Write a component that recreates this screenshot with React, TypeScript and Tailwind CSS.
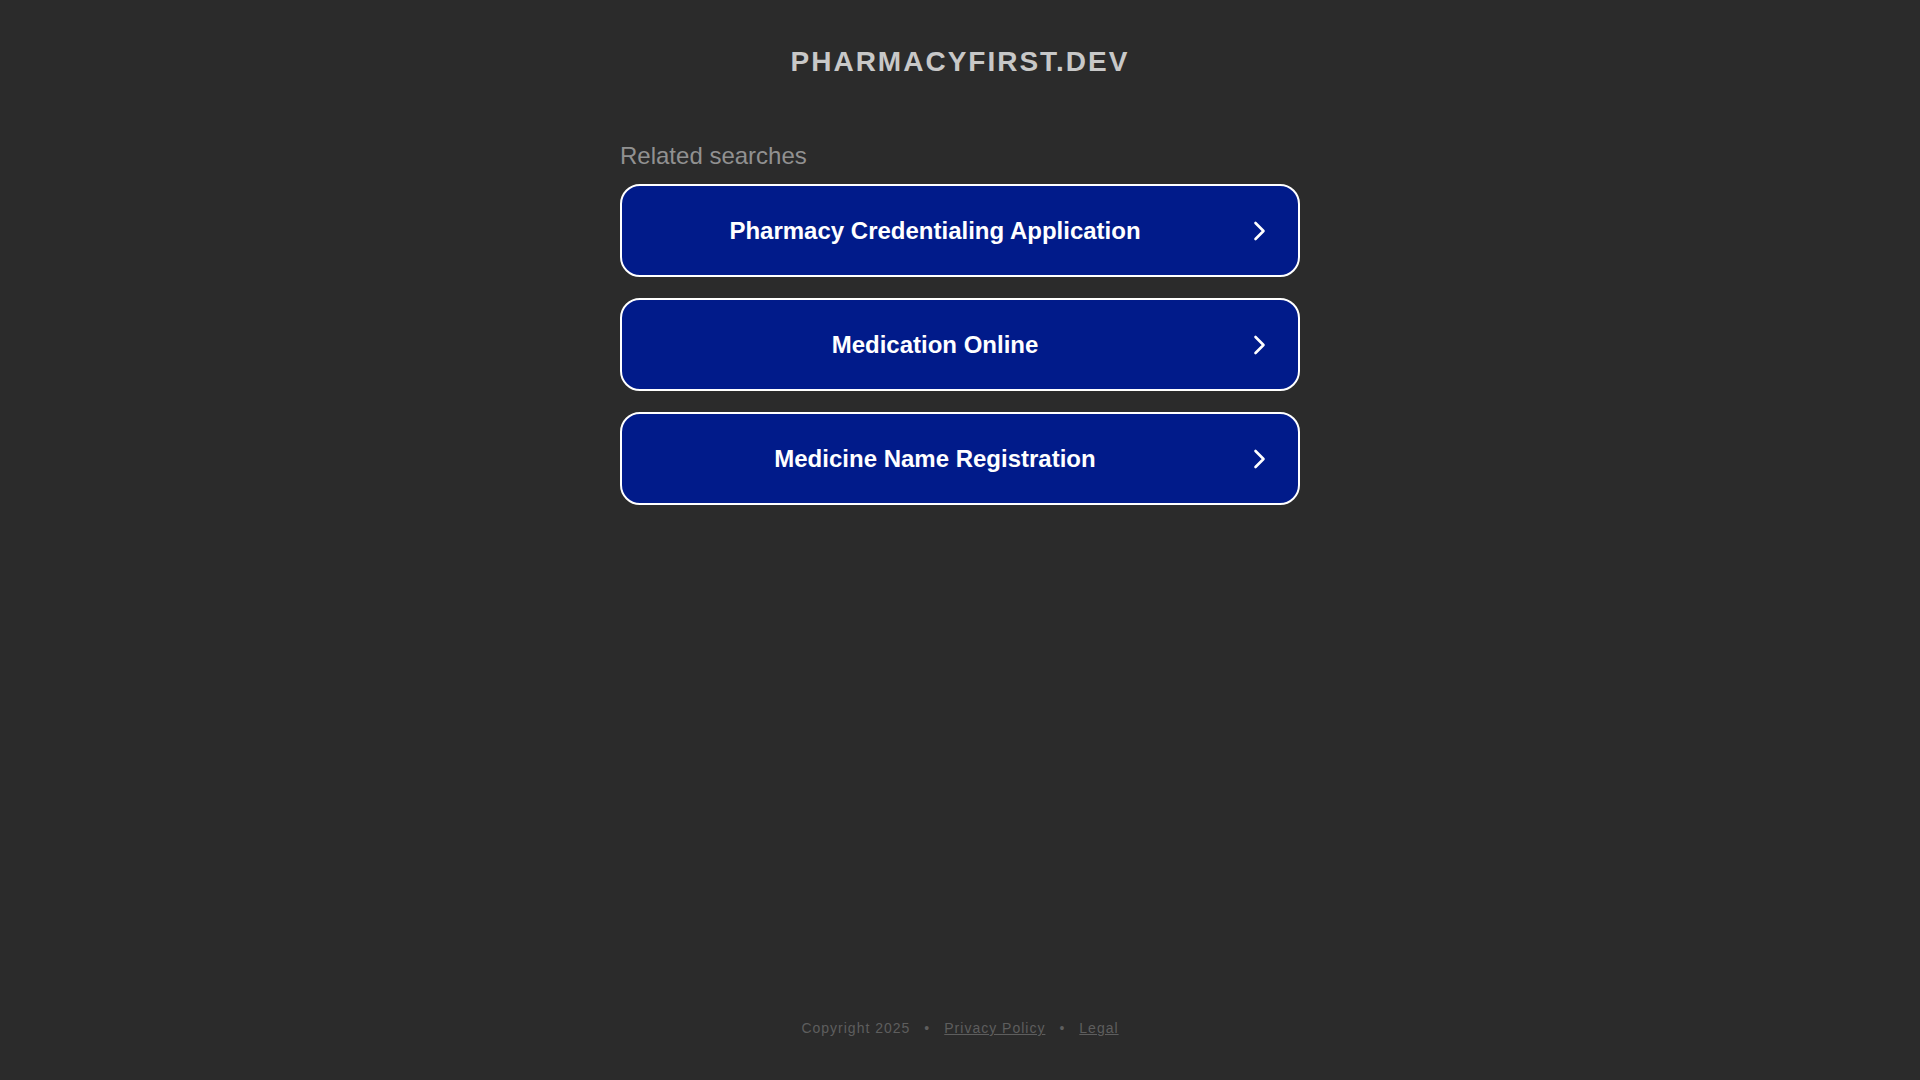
const searches = [
  "Pharmacy Credentialing Application",
  "Medication Online",
  "Medicine Name Registration",
];

const Chevron = () => (
  <svg width="24" height="24" viewBox="0 0 24 24" fill="none" className="shrink-0 mr-[26px]">
    <path d="M7.5 4 L15.5 12 L7.5 20" stroke="white" strokeWidth="2.6" strokeLinecap="round" strokeLinejoin="round" />
  </svg>
);

export default function App() {
  return (
    <div className="min-h-screen bg-[#2b2b2b] flex flex-col items-center font-['Liberation_Sans',Arial,sans-serif]">
      <h1 className="mt-[46px] text-[28px] leading-[32px] font-bold tracking-[2px] text-[#c8c8c8]">
        PHARMACYFIRST.DEV
      </h1>

      <div className="w-[680px] mt-[64px]">
        <div className="text-[24px] leading-[28px] text-[#919191]">Related searches</div>
        <div className="mt-[14px] flex flex-col gap-[21px]">
          {searches.map((s) => (
            <a
              key={s}
              href="#"
              className="h-[93px] flex items-center rounded-[20px] border-2 border-white bg-[#011b8a]"
            >
              <span className="flex-1 text-center text-[24px] font-bold text-white">{s}</span>
              <Chevron />
            </a>
          ))}
        </div>
      </div>

      <div className="flex-1" />

      <footer className="mb-[42px] text-[14px] leading-[20px] tracking-[1px] text-[#5e5e5e] flex items-center">
        <span>Copyright 2025</span>
        <span className="mx-[14px]">•</span>
        <a href="#" className="underline">Privacy Policy</a>
        <span className="mx-[14px]">•</span>
        <a href="#" className="underline">Legal</a>
      </footer>
    </div>
  );
}
